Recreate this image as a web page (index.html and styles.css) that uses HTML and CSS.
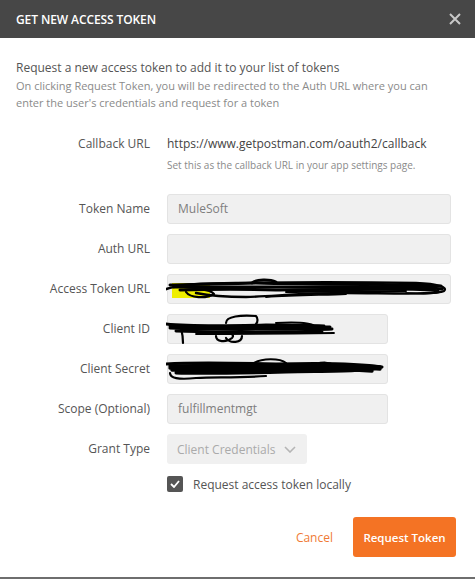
FILE: index.html
```html
<!DOCTYPE html>
<html>
<head>
<meta charset="utf-8">
<link rel="stylesheet" href="styles.css">
</head>
<body>
<div class="dialog">
  <div class="header">
    <span class="title">GET NEW ACCESS TOKEN</span>
    <svg class="close" width="12" height="12" viewBox="0 0 12 12"><path d="M1 1 L11 11 M11 1 L1 11" stroke="#c8c8c8" stroke-width="2" fill="none"/></svg>
  </div>
  <div class="content">
    <div class="intro">
      <div class="lead">Request a new access token to add it to your list of tokens</div>
      <div class="sub">On clicking Request Token, you will be redirected to the Auth URL where you can enter the user's credentials and request for a token</div>
    </div>
    <div class="callback">
      <div class="label">Callback URL</div>
      <div class="cb-value">
        <div class="cb-url">https://www.getpostman.com/oauth2/callback</div>
        <div class="cb-help">Set this as the callback URL in your app settings page.</div>
      </div>
    </div>
    <div class="form">
      <div class="label">Token Name</div>
      <div class="input wide">MuleSoft</div>

      <div class="label">Auth URL</div>
      <div class="input wide"></div>

      <div class="label">Access Token URL</div>
      <div class="input wide scribbled">
        <span class="hl"></span>
        <svg class="scribble" width="284" height="30" viewBox="0 0 284 30">
          <g fill="none" stroke="#000" stroke-linecap="round" stroke-linejoin="round">
            <path d="M-2 16 C 10 10, 40 9, 70 9 C 120 8, 200 8, 250 9 C 272 10, 282 13, 278 17 C 270 21, 220 19, 180 19 C 140 19, 110 22, 80 23 C 60 23, 40 21, 30 19" stroke-width="2.4"/>
            <path d="M4 11 C 30 10, 60 10, 90 9 C 120 10, 160 10, 200 10 C 230 11, 260 11, 275 12" stroke-width="3"/>
            <path d="M8 13 C 40 13, 80 13, 120 13 C 160 13, 200 12, 240 13 C 255 13, 268 14, 276 15" stroke-width="3.2"/>
            <path d="M14 16 C 50 15, 80 15, 110 16 C 140 15, 170 16, 220 15 C 240 15, 262 15, 272 17" stroke-width="3"/>
            <path d="M120 18 C 150 18, 190 17, 240 17" stroke-width="2"/>
            <path d="M20 18 C 24 24, 40 25, 48 20 C 44 15, 28 14, 18 16" stroke-width="2.2"/>
            <path d="M86 9 C 90 5, 104 5, 110 8" stroke-width="2.8"/>
            <path d="M100 23 C 130 21, 160 21, 180 20" stroke-width="1.8"/>
            <path d="M240 19 C 255 20, 268 20, 275 18" stroke-width="1.6"/>
          </g>
        </svg>
      </div>

      <div class="label">Client ID</div>
      <div class="input narrow scribbled">
        <svg class="scribble" width="170" height="32" viewBox="0 0 170 32">
          <g fill="none" stroke="#000" stroke-linecap="round" stroke-linejoin="round">
            <path d="M0 10 C 20 12, 60 12, 100 11 C 120 11, 140 11, 158 12" stroke-width="2.8"/>
            <path d="M4 12 C 30 13, 70 13, 110 13 C 130 13, 150 13, 164 13" stroke-width="3"/>
            <path d="M4 14 C 30 15, 70 16, 110 15 C 130 15, 150 16, 166 15" stroke-width="3"/>
            <path d="M10 17 C 40 18, 80 19, 120 18 C 135 18, 145 18, 156 18" stroke-width="3"/>
            <path d="M30 20 C 60 20, 100 20, 168 19" stroke-width="1.8"/>
            <path d="M15 14 C 16 18, 17 22, 17 29" stroke-width="2.2"/>
            <path d="M60 9 C 60 2, 75 1, 90 2 C 92 4, 92 8, 90 10" stroke-width="2.2"/>
            <path d="M50 22 C 50 28, 60 29, 66 24 C 70 20, 62 18, 55 20 M 60 24 C 64 30, 76 29, 76 22" stroke-width="2.2"/>
            <path d="M110 9 C 130 8, 145 9, 148 12" stroke-width="2"/>
          </g>
        </svg>
      </div>

      <div class="label">Client Secret</div>
      <div class="input narrow scribbled">
        <svg class="scribble" width="222" height="32" viewBox="0 0 222 32">
          <g fill="none" stroke="#000" stroke-linecap="round" stroke-linejoin="round">
            <path d="M0 10 C 30 8, 70 9, 110 10 C 150 9, 190 9, 216 13 C 200 18, 160 17, 120 18 C 80 19, 40 20, 10 19" stroke-width="3"/>
            <path d="M4 12 C 40 11, 90 12, 140 11 C 170 11, 200 12, 214 13" stroke-width="3.4"/>
            <path d="M4 14 C 40 14, 90 14, 140 13 C 170 13, 200 14, 214 15" stroke-width="3.4"/>
            <path d="M6 16 C 40 16, 90 17, 130 15 C 160 15, 190 16, 206 17" stroke-width="3.4"/>
            <path d="M10 18 C 40 18, 90 18, 130 17" stroke-width="2.6"/>
            <path d="M4 19 C 4 24, 12 26, 30 24 C 50 23, 70 24, 100 22" stroke-width="2.2"/>
            <path d="M88 9 C 96 4, 114 4, 120 9" stroke-width="2.2"/>
            <path d="M150 10 C 156 8, 164 8, 168 11" stroke-width="2"/>
          </g>
        </svg>
      </div>

      <div class="label">Scope (Optional)</div>
      <div class="input narrow">fulfillmentmgt</div>

      <div class="label">Grant Type</div>
      <div class="select">
        <span>Client Credentials</span>
        <svg width="12" height="7" viewBox="0 0 12 7"><path d="M1 1 L6 6 L11 1" stroke="#b5b5b5" stroke-width="1.6" fill="none"/></svg>
      </div>

      <div class="spacer"></div>
      <label class="check">
        <span class="box"><svg width="10" height="8" viewBox="0 0 10 8"><path d="M1 4 L4 7 L9 1" stroke="#fff" stroke-width="1.8" fill="none"/></svg></span>
        <span>Request access token locally</span>
      </label>
    </div>
    <div class="footer">
      <span class="cancel">Cancel</span>
      <span class="btn">Request Token</span>
    </div>
  </div>
</div>
</body>
</html>
```
FILE: styles.css
```css
* { box-sizing: border-box; }
html, body { margin: 0; padding: 0; background: #fff; }
body {
  font-family: "Open Sans", "Liberation Sans", sans-serif;
  color: #505050;
  width: 475px;
  height: 579px;
  overflow: hidden;
}
.dialog {
  height: 579px;
  display: flex;
  flex-direction: column;
  border-bottom: 2px solid #6e6e6e;
}
.header {
  height: 38px;
  background: #474747;
  display: flex;
  align-items: center;
  justify-content: space-between;
  padding: 0 14px 0 16px;
}
.title {
  color: #fff;
  font-size: 12px;
  font-weight: 600;
  letter-spacing: -0.1px;
}
.close { display: block; }
.content {
  flex: 1;
  padding: 21px 19px 0 16px;
  display: flex;
  flex-direction: column;
}
.lead {
  font-size: 12px;
  line-height: 18px;
  color: #555;
}
.sub {
  font-size: 11px;
  line-height: 17px;
  color: #8a8a8a;
}
.callback {
  margin-top: 24px;
  display: grid;
  grid-template-columns: 134px 1fr;
  column-gap: 17px;
}
.label {
  text-align: right;
  font-size: 12px;
  line-height: 18px;
  color: #555;
}
.form .label { line-height: 30px; }
.cb-url {
  font-size: 12px;
  line-height: 18px;
  color: #444;
}
.cb-help {
  margin-top: 5px;
  font-size: 10px;
  line-height: 14px;
  color: #8a8a8a;
}
.form {
  margin-top: 22px;
  display: grid;
  grid-template-columns: 134px 1fr;
  column-gap: 17px;
  row-gap: 10px;
  align-items: start;
}
.input {
  height: 30px;
  background: #f0f0f0;
  border: 1px solid #e3e3e3;
  border-radius: 3px;
  padding-left: 10px;
  font-size: 12px;
  line-height: 28px;
  color: #7e7e7e;
  position: relative;
}
.wide { width: 284px; }
.narrow { width: 221px; }
.scribbled { overflow: visible; }
.scribble {
  position: absolute;
  left: -2px;
  top: -1px;
}
.hl {
  position: absolute;
  left: 4px;
  top: 8px;
  width: 38px;
  height: 15px;
  background: #eeee00;
}
.select {
  width: 140px;
  height: 30px;
  background: #f0f0f0;
  border-radius: 3px;
  padding: 0 11px 0 10px;
  display: flex;
  align-items: center;
  justify-content: space-between;
  font-size: 12px;
  color: #aaa;
}
.select svg { display: block; }
.spacer { height: 16px; }
.check {
  display: flex;
  align-items: center;
  gap: 10px;
  font-size: 12px;
  color: #555;
  margin-top: 2px;
  height: 16px;
}
.box {
  width: 16px;
  height: 16px;
  border-radius: 2px;
  background: #555;
  display: flex;
  align-items: center;
  justify-content: center;
}
.box svg { display: block; }
.footer {
  margin-top: 25px;
  display: flex;
  justify-content: flex-end;
  align-items: center;
  gap: 20px;
}
.cancel {
  color: #f07a35;
  font-size: 12px;
}
.btn {
  width: 103px;
  height: 40px;
  background: #f47324;
  color: #fff;
  border-radius: 3px;
  font-size: 11.5px;
  font-weight: 600;
  display: flex;
  align-items: center;
  justify-content: center;
}
```
